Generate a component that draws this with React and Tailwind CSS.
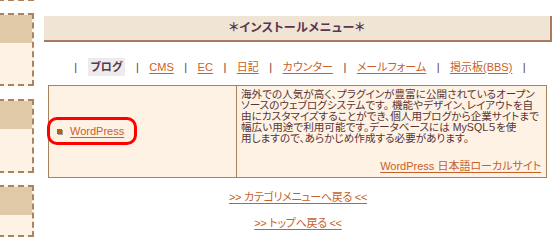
import React from 'react';

const navItems = [
  { label: 'ブログ', active: true },
  { label: 'CMS' },
  { label: 'EC' },
  { label: '日記' },
  { label: 'カウンター' },
  { label: 'メールフォーム' },
  { label: '掲示板(BBS)' },
];

const descLines = [
  '海外での人気が高く、プラグインが豊富に公開されているオープン',
  'ソースのウェブログシステムです。 機能やデザイン、レイアウトを自',
  '由にカスタマイズすることができ、個人用ブログから企業サイトまで',
  '幅広い用途で利用可能です。データベースには MySQL５を使',
  '用しますので、あらかじめ作成する必要があります。',
];

const SideBox = ({ className = '' }) => (
  <div className={`ml-[-12px] w-[46px] border-2 border-dashed border-[#A8845F] bg-[#FDF2E4] ${className}`}>
    <div className="h-[28px] bg-[#E0C9A7]"></div>
  </div>
);

const App = () => {
  return (
    <div
      className="flex w-[559px] h-[237px] overflow-hidden bg-white text-[11px] text-[#5A3434] [font-feature-settings:'palt']"
      style={{ fontFamily: '"Liberation Sans", "Noto Sans CJK JP", sans-serif' }}
    >
      {/* sidebar */}
      <div className="w-[34px] shrink-0 flex flex-col">
        <div className="ml-[-12px] w-[46px] h-[2px] border-b-2 border-r-2 border-dashed border-[#A8845F] mt-[-1px]"></div>
        <SideBox className="mt-[12px] h-[85px]" />
        <SideBox className="mt-[13px] h-[85px]" />
        <SideBox className="mt-[12px] h-[60px]" />
      </div>

      {/* main */}
      <div className="ml-[10px] w-[508px] shrink-0 pt-[16px]">
        <div className="h-[26px] bg-[#F0E4D4] border-b-2 border-r-2 border-[#A87C5A] flex items-center justify-center">
          <span className="font-bold text-[12px] text-[#5A3550] tracking-[0.5px]">＊インストールメニュー＊</span>
        </div>

        <div className="mt-[16px] h-[18px] flex items-center justify-center gap-[10.5px] pl-[4px]">
          <span className="text-[#5A3A40]">|</span>
          {navItems.map((item) => (
            <React.Fragment key={item.label}>
              {item.active ? (
                <span className="h-[18px] px-[3px] flex items-center bg-[#ECECEC] font-bold text-[#5A3550]">{item.label}</span>
              ) : (
                <a href="#" className="text-[#C8602A] underline underline-offset-2">{item.label}</a>
              )}
              <span className="text-[#5A3A40]">|</span>
            </React.Fragment>
          ))}
        </div>

        <div className="mt-[9px] ml-[4px] w-[499px] h-[93px] flex border border-[#A8825F] bg-[#FDF2E4]">
          <div className="relative w-[188px] shrink-0 border-r border-[#A8825F] flex items-center pl-[8px] gap-[8px]">
            <span className="w-[5px] h-[5px] bg-[#B5620C] shadow-[1px_1px_0_#9A9A9A]"></span>
            <a href="#" className="text-[#C8602A] underline underline-offset-2">WordPress</a>
            <div className="absolute left-[-2px] top-[31px] w-[90px] h-[28px] border-[3px] border-[#FF0000] rounded-[10px]"></div>
          </div>
          <div className="flex-1 flex flex-col pl-[4px] pr-[5px] pt-[3px] pb-[3px]">
            <div className="leading-[11px] text-[10.6px] whitespace-nowrap">
              {descLines.map((line) => (
                <div key={line}>{line}</div>
              ))}
            </div>
            <div className="mt-auto text-right">
              <a href="#" className="text-[#C8602A] underline underline-offset-2">WordPress 日本語ローカルサイト</a>
            </div>
          </div>
        </div>

        <div className="mt-[11px] flex flex-col items-center gap-[9px] tracking-[-0.3px]">
          <a href="#" className="text-[#C8602A] underline underline-offset-2">&gt;&gt; カテゴリメニューへ戻る &lt;&lt;</a>
          <a href="#" className="text-[#C8602A] underline underline-offset-2">&gt;&gt; トップへ戻る &lt;&lt;</a>
        </div>
      </div>
    </div>
  );
};

export default App;
